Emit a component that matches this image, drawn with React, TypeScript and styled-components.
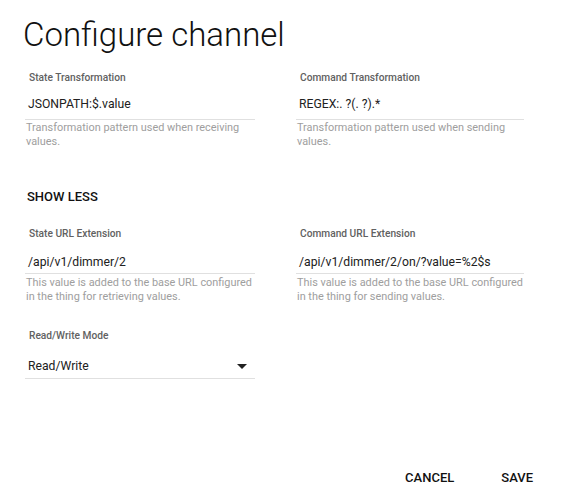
import React from "react";
import styled, { createGlobalStyle } from "styled-components";

const Global = createGlobalStyle`
  html, body { margin: 0; padding: 0; background: #ffffff; }
  body { font-family: Roboto, "Noto Sans", "Liberation Sans", sans-serif; color: #212121; }
`;

const Dialog = styled.div`
  width: 565px;
  height: 500px;
  box-sizing: border-box;
  padding: 15px 25px 0 25px;
  display: flex;
  flex-direction: column;
`;

const Title = styled.h1`
  margin: 0 0 0 -2px;
  font-size: 33px;
  line-height: 40px;
  font-weight: 300;
  color: #111;
`;

const Grid = styled.div<{ $top: number }>`
  display: grid;
  grid-template-columns: 230px 228px;
  column-gap: 41px;
  margin-top: ${(p) => p.$top}px;
`;

const Field = styled.div`
  display: flex;
  flex-direction: column;
`;

const Label = styled.label`
  font-size: 10.2px;
  line-height: 14px;
  font-weight: 500;
  color: #616161;
  padding-left: 4px;
`;

const InputRow = styled.div<{ $top: number; $pad: number }>`
  display: flex;
  align-items: center;
  justify-content: space-between;
  margin-top: ${(p) => p.$top}px;
  padding: 0 8px ${(p) => p.$pad}px 3px;
  font-size: 12.2px;
  line-height: 20px;
  color: #212121;
  border-bottom: 1px solid #e0e0e0;
  white-space: nowrap;
`;

const Helper = styled.div<{ $gap: number }>`
  margin-top: ${(p) => p.$gap}px;
  padding-left: 1px;
  font-size: 10.9px;
  line-height: 14px;
  color: #9e9e9e;
`;

const ShowLess = styled.button`
  align-self: flex-start;
  margin: 40px 0 0 0;
  padding: 0 0 0 2px;
  background: none;
  border: none;
  font-family: inherit;
  font-size: 13px;
  line-height: 16px;
  font-weight: 500;
  color: #111;
  text-transform: uppercase;
`;

const Arrow = styled.span`
  width: 0;
  height: 0;
  border-left: 5px solid transparent;
  border-right: 5px solid transparent;
  border-top: 5px solid #212121;
`;

const Actions = styled.div`
  margin-top: auto;
  margin-bottom: 14px;
  display: flex;
  justify-content: flex-end;
  gap: 47px;
  padding-right: 7px;
`;

const ActionButton = styled.button`
  background: none;
  border: none;
  padding: 0;
  font-family: inherit;
  font-size: 13px;
  line-height: 16px;
  font-weight: 500;
  color: #111;
`;

type F = { label: string; value: string; helper?: string; select?: boolean };
type S = { top: number; pad: number; gap: number };

function FieldView({ f, s }: { f: F; s: S }) {
  return (
    <Field>
      <Label>{f.label}</Label>
      <InputRow $top={s.top} $pad={s.pad}>
        <span>{f.value}</span>
        {f.select && <Arrow />}
      </InputRow>
      {f.helper && <Helper $gap={s.gap}>{f.helper}</Helper>}
    </Field>
  );
}

const first: S = { top: 9, pad: 5, gap: 1 };
const second: S = { top: 11, pad: 1, gap: 2 };
const third: S = { top: 13, pad: 2, gap: 0 };

export default function App() {
  return (
    <>
      <Global />
      <Dialog>
        <Title>Configure channel</Title>
        <Grid $top={16}>
          <FieldView
            s={first}
            f={{
              label: "State Transformation",
              value: "JSONPATH:$.value",
              helper: "Transformation pattern used when receiving values.",
            }}
          />
          <FieldView
            s={first}
            f={{
              label: "Command Transformation",
              value: "REGEX:. ?(. ?).*",
              helper: "Transformation pattern used when sending values.",
            }}
          />
        </Grid>
        <ShowLess>Show less</ShowLess>
        <Grid $top={22}>
          <FieldView
            s={second}
            f={{
              label: "State URL Extension",
              value: "/api/v1/dimmer/2",
              helper: "This value is added to the base URL configured in the thing for retrieving values.",
            }}
          />
          <FieldView
            s={second}
            f={{
              label: "Command URL Extension",
              value: "/api/v1/dimmer/2/on/?value=%2$s",
              helper: "This value is added to the base URL configured in the thing for sending values.",
            }}
          />
        </Grid>
        <Grid $top={25}>
          <FieldView
            s={third}
            f={{ label: "Read/Write Mode", value: "Read/Write", select: true }}
          />
        </Grid>
        <Actions>
          <ActionButton>CANCEL</ActionButton>
          <ActionButton>SAVE</ActionButton>
        </Actions>
      </Dialog>
    </>
  );
}
